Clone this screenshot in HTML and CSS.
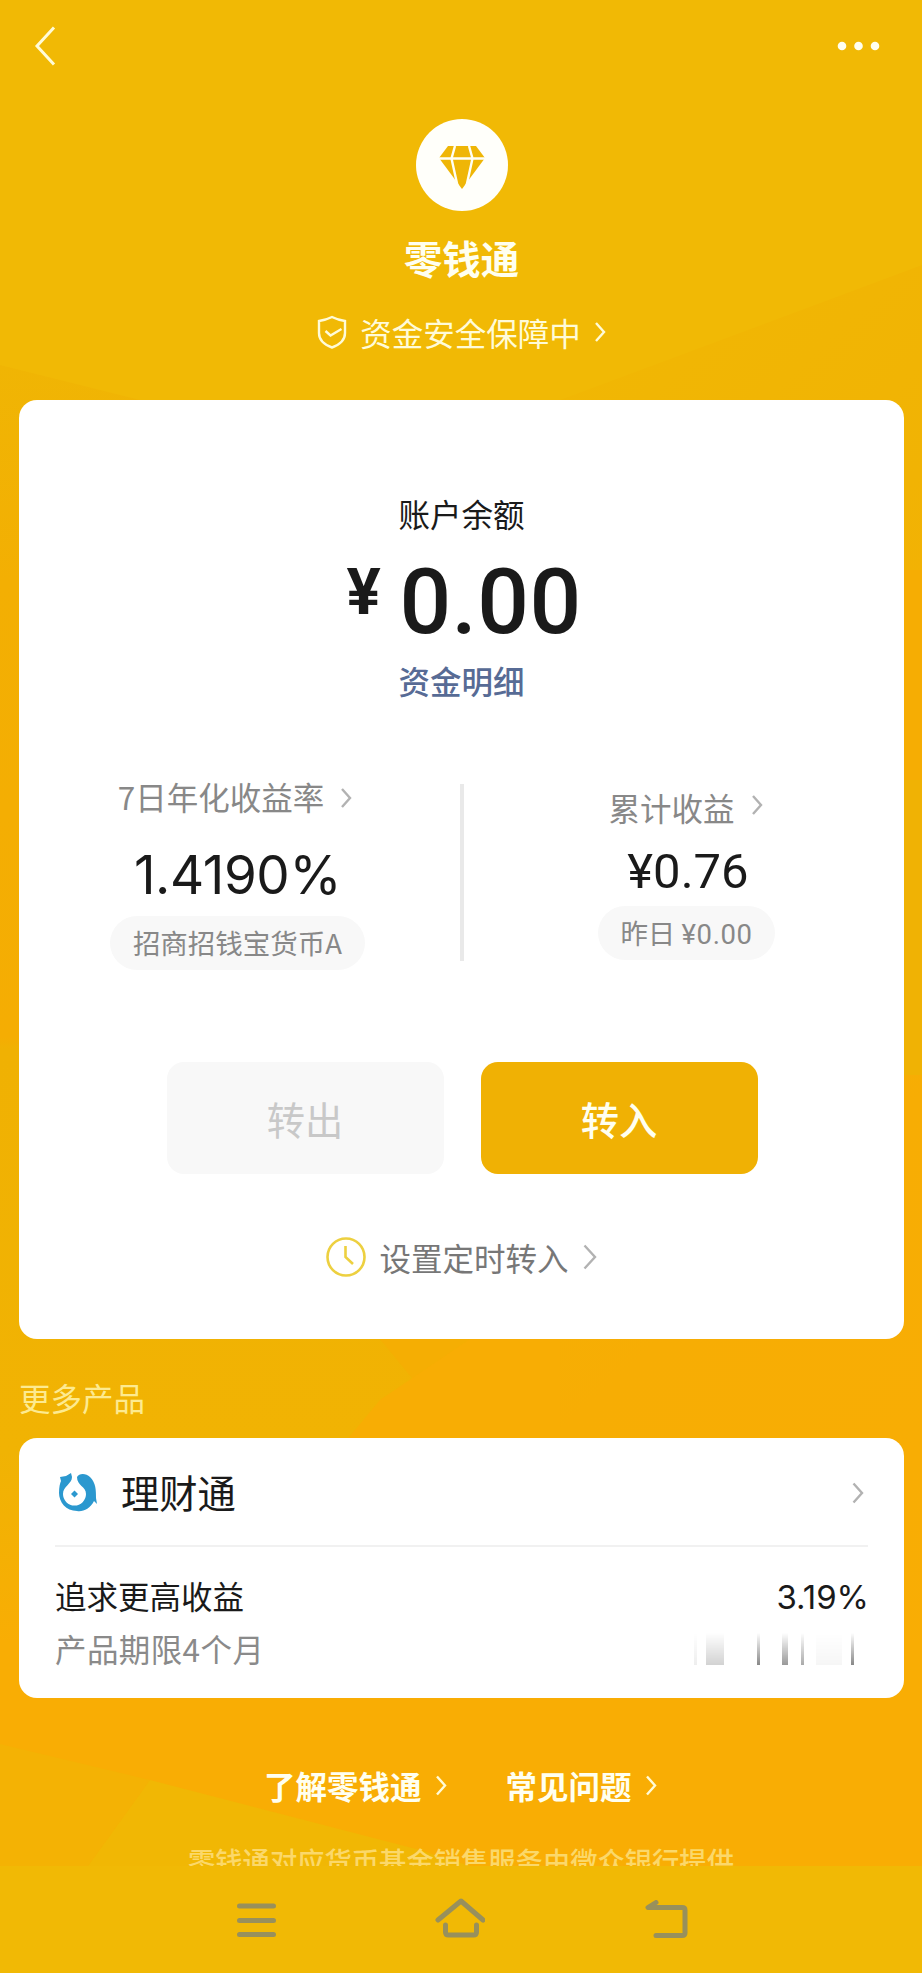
FILE: index.html
```html
<!DOCTYPE html>
<html lang="zh-CN">
<head>
<meta charset="utf-8">
<title>零钱通</title>
<link rel="stylesheet" href="styles.css">
</head>
<body>
<div class="screen">
  <svg class="backdrop" viewBox="0 0 922 1973" preserveAspectRatio="none" aria-hidden="true">
    <defs>
      <linearGradient id="right" x1="0.3" y1="0" x2="0.5" y2="1"><stop offset="0" stop-color="#f1b704"/><stop offset=".25" stop-color="#f1b304"/><stop offset=".6" stop-color="#f7ad04"/><stop offset="1" stop-color="#f9ad04"/></linearGradient>
      <linearGradient id="left" x1="0" y1="0" x2="0" y2="1"><stop offset="0" stop-color="#f0b504"/><stop offset=".2" stop-color="#f3af03"/><stop offset=".62" stop-color="#f5ad03"/><stop offset=".63" stop-color="#f0b103"/><stop offset="1" stop-color="#f1b303"/></linearGradient>
      <linearGradient id="low" x1="0" y1="0" x2="0" y2="1"><stop offset="0" stop-color="#f0b304"/><stop offset="1" stop-color="#f9ad04"/></linearGradient>
    </defs>
    <rect width="922" height="1973" fill="#f1b905"/>
    <path d="M922 265 560 400V1973H922Z" fill="url(#right)"/>
    <path d="M904 570H922V780H904Z" fill="#f6ad03"/>
    <path d="M904 780H922V1075H904Z" fill="#f0b204"/>
    <path d="M0 365 140 400 560 900V1340L340 1450H0Z" fill="url(#left)"/>
    <path d="M380 1339H560V1460H330L430 1400Z" fill="#f5ae03"/>
    <path d="M470 1339 380 1400 330 1460H560V1339Z" fill="#f8ad04"/>
    <path d="M0 1450H30V1650H0Z" fill="url(#low)"/>
    <path d="M0 1640H922V1866H0Z" fill="#f9ad04"/>
    <path d="M0 1744 150 1780 88 1866H0Z" fill="#f4b204"/>
    <path d="M150 1780 420 1850 470 1866H88Z" fill="#f1b704"/>
  </svg>

  <header class="topbar">
    <svg width="22" height="40" viewBox="0 0 22 40"><path d="M20 1.500 3 20 20 38.500" class="line line-back"/></svg>
    <svg width="44" height="10" viewBox="0 0 44 10" fill="#fffff0"><circle cx="5" cy="5" r="4.3"/><circle cx="21.500" cy="5" r="4.3"/><circle cx="38" cy="5" r="4.3"/></svg>
  </header>

  <section class="hero">
    <div class="badge">
      <svg width="46" height="43" viewBox="0 0 46 43">
        <path d="M9 0H37L46 12 23 43 0 12Z" fill="#efb606"/>
        <path d="M0 12.500H46M16 0 12.500 12.500 19 42M30 0 33.500 12.500 27 42" fill="none" stroke="#fffff5" stroke-width="2.400"/>
      </svg>
    </div>
    <h1 class="name">零钱通</h1>
    <div class="safety">
      <svg width="30" height="34" viewBox="0 0 30 34"><path d="M15 2Q21 5 28 6V18C28 25 22 30 15 32.500 8 30 2 25 2 18V6Q9 5 15 2ZM8.500 16l5 4.500 11-6.500" class="line"/></svg>
      <span>资金安全保障中</span>
      <svg class="chev" width="12" height="22" viewBox="0 0 12 22"><path d="M2 2 10 11 2 20" class="line"/></svg>
    </div>
  </section>

  <main class="card account">
    <div class="label">账户余额</div>
    <div class="balance"><span class="yen">¥</span><span class="amount">0.00</span></div>
    <div class="detail">资金明细</div>

    <div class="stats">
      <div class="stat stat-rate">
        <div class="stat-head"><span>7日年化收益率</span><svg width="12" height="20" viewBox="0 0 12 20"><path d="M2 1 10 10 2 19" class="line grey"/></svg></div>
        <div class="rate">1.4190%</div>
        <div class="pill">招商招钱宝货币A</div>
      </div>
      <div class="rule"></div>
      <div class="stat stat-total">
        <div class="stat-head"><span>累计收益</span><svg class="lift" width="12" height="20" viewBox="0 0 12 20"><path d="M2 1 10 10 2 19" class="line grey"/></svg></div>
        <div class="total">¥0.76</div>
        <div class="pill">昨日 <span class="num">¥0.00</span></div>
      </div>
    </div>

    <div class="actions">
      <div class="btn btn-out">转出</div>
      <div class="btn btn-in">转入</div>
    </div>

    <div class="schedule">
      <svg width="40" height="40" viewBox="0 0 40 40"><path d="M20 1.500A18.500 18.500 0 1 1 20 38.500 18.500 18.500 0 0 1 20 1.500M19.500 9V20L27 27" fill="none" stroke="#edd040" stroke-width="2.600"/></svg>
      <span>设置定时转入</span>
      <svg width="14" height="26" viewBox="0 0 14 26"><path d="M1.500 1.500 12 13 1.500 24.500" class="line grey"/></svg>
    </div>
  </main>

  <div class="more">更多产品</div>

  <section class="card product">
    <div class="product-head">
      <svg width="40" height="40" viewBox="0 0 40 40">
        <path d="M2 4 8 3 13 0 14 4C14 11 5 13 5 21A11.500 11.500 0 0 0 28 21C28 13 19 13 19 4 21 0 28 0 32 4 38 10 38 17 38 25L39 31 36 28C32 36 25 39 19 38 8 38 1 29 1 20 1 14 2 10 3 8Z" fill="#2b98cf"/>
        <path d="M16.500 17.500 20 21 16.500 24.500 13 21Z" fill="#2b98cf"/>
      </svg>
      <span class="product-name">理财通</span>
      <svg class="go" width="12" height="22" viewBox="0 0 12 22"><path d="M1.500 1.500 10 11 1.500 20.500" class="line grey"/></svg>
    </div>
    <div class="product-row"><span>追求更高收益</span><span class="yield">3.19%</span></div>
    <div class="product-row sub">
      <span class="term">产品期限4个月</span>
      <span class="streaks"><i class="s1"></i><i class="s2"></i><i class="s3"></i><i class="s4"></i><i class="s5"></i><i class="s6"></i><i class="s7"></i></span>
    </div>
  </section>

  <nav class="links">
    <span>了解零钱通</span><svg width="12" height="21" viewBox="0 0 12 21"><path d="M2 1.500 10 10.500 2 19.500" class="line"/></svg>
    <span class="second">常见问题</span><svg width="12" height="21" viewBox="0 0 12 21"><path d="M2 1.500 10 10.500 2 19.500" class="line"/></svg>
  </nav>

  <div class="notice">零钱通对应货币基金销售服务由微众银行提供</div>

  <footer class="sysbar">
    <svg width="40" height="40" viewBox="0 0 40 40"><path d="M3.500 6H37.500M3.500 20.500H37.500M3.500 34.500H37.500" class="sys"/></svg>
    <svg width="50" height="42" viewBox="0 0 50 42"><path d="M3 24 26 5 48 24M10.500 29V36Q10.500 39 13.500 39H38.500Q41.500 39 41.500 36V29" class="sys"/></svg>
    <svg width="44" height="40" viewBox="0 0 44 40"><path d="M12 2.500 4 7.500H38Q41 7.500 41 10V33Q41 35.500 38 35.500H12" class="sys"/></svg>
  </footer>
</div>
</body>
</html>
```

FILE: styles.css
```css
* { box-sizing: border-box; }
body { margin: 0; font-family: "Noto Sans CJK SC", sans-serif; }
svg { display: block; flex: none; }
.screen {
  position: relative;
  width: 922px;
  height: 1973px;
  overflow: hidden;
  display: flex;
  flex-direction: column;
  background: #f1b905;
  font-size: 31.5px;
  color: #1a1a1a;
  white-space: nowrap;
}
.screen > * { position: relative; flex: none; }
.screen > .backdrop { position: absolute; inset: 0; width: 922px; height: 1973px; }
.line { fill: none; stroke: #fffbd8; stroke-width: 2.4; }
.line-back { stroke-width: 3; }
.grey { stroke: #b2b2b2; }

.topbar { height: 91px; padding: 0 41px 0 34px; display: flex; align-items: center; justify-content: space-between; }

.hero { height: 309px; padding: 28px 0 0 1px; display: flex; flex-direction: column; align-items: center; color: #fffff0; }
.badge { width: 92px; height: 92px; border-radius: 50%; background: #fffffa; display: grid; place-items: center; padding-top: 4px; }
.name { margin: 17px 0 0; height: 58px; line-height: 58px; font-size: 38.4px; font-weight: 700; }
.safety { margin-top: 21px; height: 50px; line-height: 48px; display: flex; align-items: center; color: #fffbd8; }
.safety span { margin: 0 13px 0 13px; }

.card { margin: 0 18px 0 19px; background: #fff; border-radius: 18px; }
.account { height: 939px; padding-top: 88px; display: flex; flex-direction: column; align-items: center; }
.label { height: 50px; line-height: 50px; }
.balance { height: 117px; padding-left: 5px; display: flex; font-family: Roboto, sans-serif; font-weight: 500; }
.yen { width: 53px; font-size: 64px; line-height: 109px; font-weight: 700; }
.amount { font-size: 91px; line-height: 128px; letter-spacing: .4px; }
.detail { height: 50px; line-height: 50px; color: #576b95; font-weight: 500; }

.stats { align-self: stretch; height: 186px; margin-top: 79px; display: grid; grid-template-columns: 441px 4px 440px; }
.rule { background: #e9e9e9; height: 177px; }
.stat { display: flex; flex-direction: column; align-items: center; color: #888; }
.stat-rate { padding-right: 4px; }
.stat-total { padding: 10px 0 0 5px; }
.stat-head { display: flex; align-items: center; gap: 16px; height: 30px; line-height: 30px; }
.stat-head span { margin-top: -5px; }
.stat-rate .stat-head { padding-right: 5px; margin-top: -1px; }
.stat-total .stat-head { padding-right: 2px; }
.lift { margin-top: -9px; }
.rate, .total { height: 60px; line-height: 60px; color: #1a1a1a; }
.rate { margin-top: 32px; font-family: Inter, sans-serif; font-size: 53px; letter-spacing: -.4px; }
.total { margin-top: 18px; font-family: Roboto, sans-serif; font-size: 49px; padding-left: 3px; }
.pill { height: 54px; line-height: 52px; padding: 0 23px; border-radius: 27px; background: #f8f8f8; font-size: 27.5px; }
.stat-rate .pill { margin-top: 11px; }
.stat-total .pill { margin-top: 4px; padding: 0 22px; }
.num { font-family: Roboto, sans-serif; font-size: 27.5px; letter-spacing: .6px; }

.actions { display: flex; gap: 37px; margin: 92px 0 0 1px; }
.btn { width: 277px; height: 112px; line-height: 113px; text-align: center; border-radius: 17px; font-size: 38.3px; font-weight: 500; }
.btn-out { background: #f8f8f8; color: #c8c8c8; font-weight: 400; }
.btn-in { background: #f0b104; color: #fffff0; }
.schedule { margin-top: 58px; height: 50px; line-height: 48px; display: flex; align-items: center; color: #777; }
.schedule span { margin: 0 14px 0 13px; }

.more { height: 99px; padding: 33px 0 0 19px; line-height: 50px; color: #fdea90; }

.product { height: 260px; padding: 0 36px; }
.product-head { height: 109px; border-bottom: 2px solid #f1f1f1; display: flex; align-items: center; padding: 2px 4px 0 3px; }
.product-name { margin: -2px 0 0 23px; font-size: 38.3px; line-height: 60px; }
.go { margin-left: auto; }
.product-row { display: flex; align-items: center; justify-content: space-between; height: 53px; line-height: 53px; }
.product-head + .product-row { margin-top: 22px; }
.yield { font-family: Inter, sans-serif; font-size: 33px; padding-top: 4px; margin-right: -1px; }
.sub { color: #8a8a8a; }
.term { letter-spacing: .4px; }
.streaks { display: flex; align-items: stretch; width: 180px; height: 32px; -webkit-mask-image: linear-gradient(transparent, #000); mask-image: linear-gradient(transparent, #000); }
.s1 { width: 3px; margin-left: 6px; background: #eee; }
.s2 { width: 18px; margin-left: 9px; background: #d2d2d2; }
.s3 { width: 3px; margin-left: 33px; background: #888; }
.s4 { width: 6px; margin-left: 22px; background: #999; }
.s5 { width: 3px; margin-left: 13px; background: #aaa; }
.s6 { width: 26px; margin-left: 12px; background: #f6f6f6; }
.s7 { width: 3px; margin-left: 9px; background: #888; }

.links { height: 50px; line-height: 49px; margin-top: 62px; padding-left: 264px; display: flex; align-items: center; font-weight: 700; color: #fffff0; }
.links svg { margin-left: 13px; }
.links .second { margin-left: 59px; }

.notice { height: 56px; padding-top: 30px; line-height: 40px; overflow: hidden; text-align: center; font-size: 27.3px; font-weight: 500; color: #fbd86a; }

.sysbar { height: 107px; background: #f1b905; display: flex; padding: 34px 234px 0 236px; justify-content: space-between; }
.sysbar svg:nth-child(2) { margin-top: -4px; }
.sys { fill: none; stroke: #98905c; stroke-width: 5; stroke-linecap: round; stroke-linejoin: round; }
```
